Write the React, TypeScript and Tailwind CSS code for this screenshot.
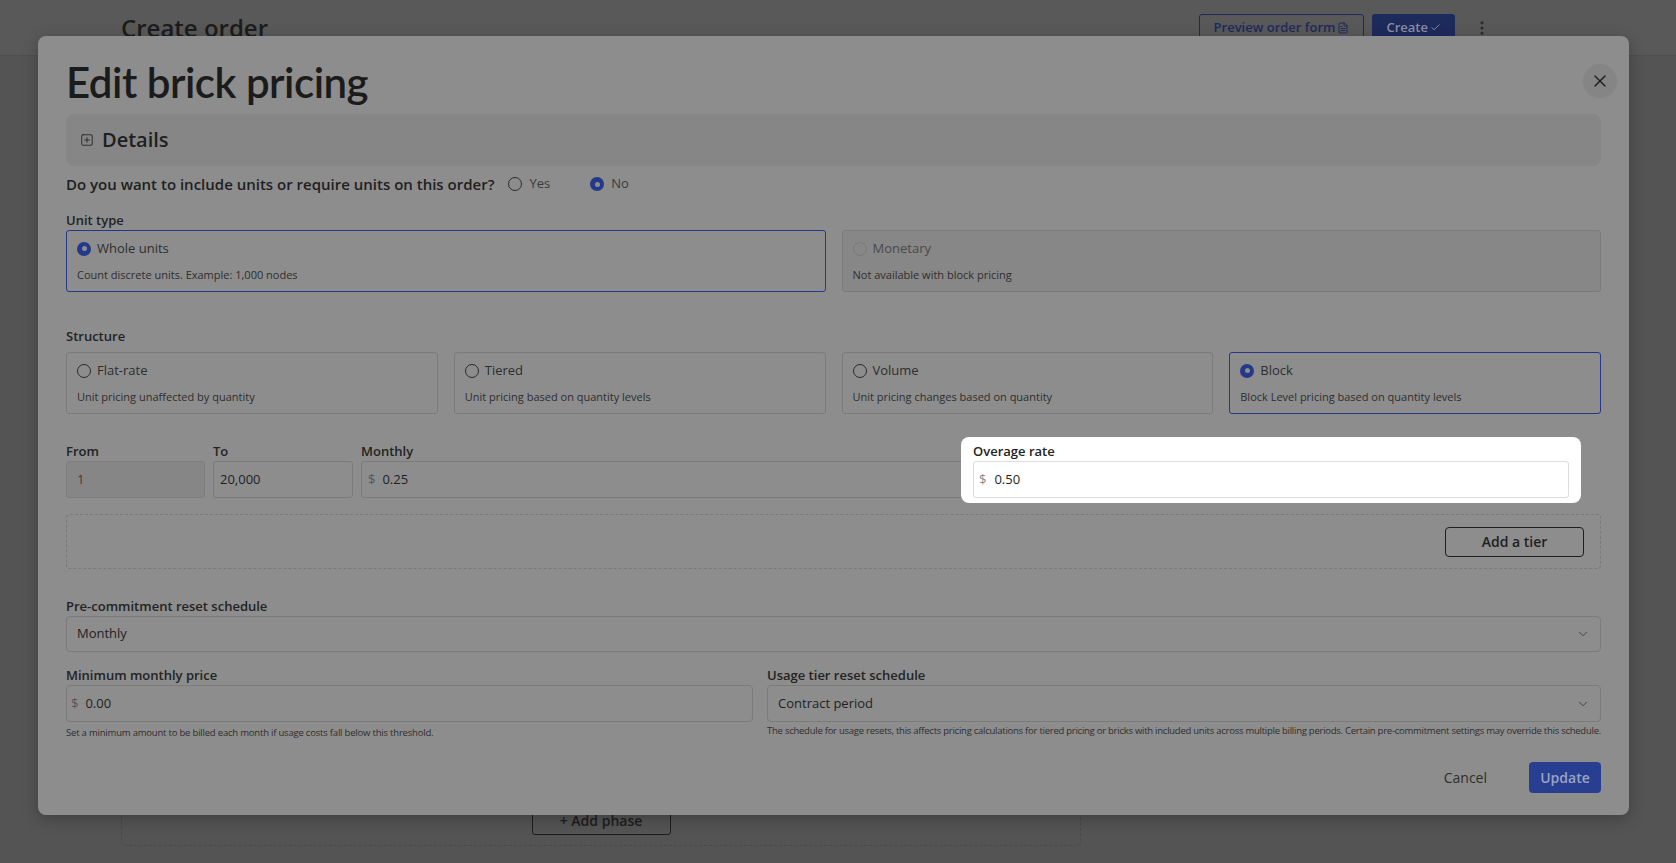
import { X, ChevronDown, SquarePlus, Check, FileText, EllipsisVertical } from "lucide-react"

function Radio({ on, disabled }: { on?: boolean; disabled?: boolean }) {
  if (on)
    return (
      <span className="flex h-[14px] w-[14px] items-center justify-center rounded-full bg-[#24398a]">
        <span className="h-[5px] w-[5px] rounded-full bg-[#8d8d8d]" />
      </span>
    )
  return <span className={`h-[14px] w-[14px] rounded-full border ${disabled ? "border-[#7a7a7a]" : "border-[#2b2b2b]"}`} />
}

function OptionCard({ title, desc, on, disabled }: { title: string; desc: string; on?: boolean; disabled?: boolean }) {
  return (
    <div className={`flex h-[62px] flex-1 flex-col justify-center gap-[8px] rounded-[3px] border px-[10px] ${on ? "border-[#24398a]" : "border-[#7b7b7b]"} ${disabled ? "bg-[#878787]" : ""}`}>
      <div className={`flex items-center gap-[6px] text-[13px] ${disabled ? "text-[#4a4a4a]" : "text-[#2e2e2e]"}`}>
        <Radio on={on} disabled={disabled} />
        {title}
      </div>
      <div className="text-[11px] text-[#2e2e2e]">{desc}</div>
    </div>
  )
}

function Label({ children, className = "" }: { children: React.ReactNode; className?: string }) {
  return <div className={`text-[13px] font-semibold text-[#232323] ${className}`}>{children}</div>
}

export default function App() {
  return (
    <div className="relative h-[863px] w-[1676px] overflow-hidden bg-[#545454]" style={{ fontFamily: '"Open Sans", sans-serif' }}>
      {/* page behind */}
      <div className="flex h-[56px] items-center justify-between border-b border-[#4f4f4f] bg-[#595959] pl-[121px] pr-[185px]">
        <div className="text-[24px] font-semibold text-[#1c1c1c]">Create order</div>
        <div className="flex items-center gap-[8px]">
          <div className="flex h-[27px] items-center gap-[2px] rounded-[3px] border border-[#1d2a5c] px-[14px] text-[13px] font-semibold text-[#1d2a5c]">
            Preview order form <FileText className="h-[12px] w-[12px]" />
          </div>
          <div className="flex h-[27px] items-center gap-[2px] rounded-[3px] bg-[#1d2a5c] px-[14px] text-[13px] font-semibold text-[#8a8fa6]">
            Create <Check className="h-[11px] w-[11px]" />
          </div>
          <EllipsisVertical className="ml-[10px] h-[18px] w-[18px] text-[#2a2a2a]" />
        </div>
      </div>
      <div className="ml-[121px] mt-[10px] flex h-[780px] w-[960px] items-end justify-center rounded-[4px] border border-dashed border-[#4a4a4a] pb-[10px]">
        <div className="flex h-[30px] w-[139px] items-center justify-center rounded-[3px] border border-[#1e1e1e] text-[14px] font-semibold text-[#1e1e1e]">+ Add phase</div>
      </div>

      {/* modal */}
      <div className="absolute left-[38px] top-[36px] flex h-[779px] w-[1591px] flex-col rounded-[8px] bg-[#8d8d8d] px-[28px] shadow-[0_4px_16px_rgba(0,0,0,0.25)]">
        <div className="flex items-start justify-between pt-[20px]">
          <div className="text-[42px] font-semibold leading-[52px] tracking-[-0.5px] text-[#1b1b1b]" style={{ fontFamily: "Lato, sans-serif" }}>Edit brick pricing</div>
          <div className="mr-[-16px] mt-[8px] flex h-[34px] w-[34px] items-center justify-center rounded-full bg-[#858585]">
            <X className="h-[20px] w-[20px] text-[#1b1b1b]" strokeWidth={1.6} />
          </div>
        </div>
        <div className="mt-[6px] flex h-[52px] items-center gap-[8px] rounded-[8px] bg-[#868686] px-[14px]">
          <SquarePlus className="h-[14px] w-[14px] text-[#2a2a2a]" strokeWidth={1.6} />
          <span className="text-[20px] font-semibold text-[#1f1f1f]">Details</span>
        </div>
        <div className="mt-[8px] flex h-[20px] items-center text-[15px] font-semibold text-[#1f1f1f]">
          Do you want to include units or require units on this order?
          <span className="ml-[14px] flex items-center gap-[7px] text-[13px] font-normal text-[#3a3a3a]"><Radio /> Yes</span>
          <span className="ml-[40px] flex items-center gap-[7px] text-[13px] font-normal text-[#3a3a3a]"><Radio on /> No</span>
        </div>
        <Label className="mt-[16px] leading-[20px]">Unit type</Label>
        <div className="flex gap-[16px]">
          <OptionCard on title="Whole units" desc="Count discrete units. Example: 1,000 nodes" />
          <OptionCard disabled title="Monetary" desc="Not available with block pricing" />
        </div>
        <Label className="mt-[34px] leading-[20px]">Structure</Label>
        <div className="mt-[6px] flex gap-[16px]">
          <OptionCard title="Flat-rate" desc="Unit pricing unaffected by quantity" />
          <OptionCard title="Tiered" desc="Unit pricing based on quantity levels" />
          <OptionCard title="Volume" desc="Unit pricing changes based on quantity" />
          <OptionCard on title="Block" desc="Block Level pricing based on quantity levels" />
        </div>

        <div className="mt-[23px] flex items-end gap-[8px]">
          <div className="w-[139px]">
            <Label className="leading-[20px]">From</Label>
            <div className="flex h-[37px] items-center rounded-[3px] border border-[#7e7e7e] bg-[#868686] px-[10px] text-[13px] text-[#3a3a3a]">1</div>
          </div>
          <div className="w-[140px]">
            <Label className="leading-[20px]">To</Label>
            <div className="flex h-[37px] items-center rounded-[3px] border border-[#7b7b7b] px-[6px] text-[13px] text-[#1f1f1f]">20,000</div>
          </div>
          <div className="w-[620px]">
            <Label className="leading-[20px]">Monthly</Label>
            <div className="flex h-[37px] items-center rounded-l-[3px] border border-[#7b7b7b] px-[6px] text-[13px] text-[#1f1f1f]">
              <span className="mr-[7px] text-[#555]">$</span>0.25
            </div>
          </div>
          <div className="relative z-10 -mb-[5px] ml-[-28px] w-[620px] rounded-[8px] bg-white px-[12px] pb-[5px] pt-[4px]">
            <div className="text-[13px] font-semibold leading-[20px] text-[#232323]">Overage rate</div>
            <div className="flex h-[37px] items-center rounded-[3px] border border-[#dcdcdc] px-[5px] text-[13px] text-[#1f1f1f]">
              <span className="mr-[8px] text-[#888]">$</span>0.50
            </div>
          </div>
        </div>

        <div className="mt-[16px] flex h-[55px] items-center justify-end rounded-[4px] border border-dashed border-[#7a7a7a] px-[16px]">
          <div className="flex h-[30px] w-[139px] items-center justify-center rounded-[4px] border border-[#1f1f1f] text-[14px] font-semibold text-[#1f1f1f]">Add a tier</div>
        </div>

        <Label className="mt-[27px] leading-[20px]">Pre-commitment reset schedule</Label>
        <div className="flex h-[36px] items-center justify-between rounded-[4px] border border-[#7b7b7b] px-[10px] text-[13px] text-[#1f1f1f]">
          Monthly <ChevronDown className="h-[14px] w-[14px] text-[#3a3a3a]" strokeWidth={1.5} />
        </div>

        <div className="mt-[13px] flex gap-[14px]">
          <div className="w-[706px]">
            <Label className="leading-[20px]">Minimum monthly price</Label>
            <div className="flex h-[37px] items-center rounded-[4px] border border-[#7b7b7b] px-[4px] text-[13px] text-[#1f1f1f]">
              <span className="mr-[7px] text-[#555]">$</span>0.00
            </div>
            <div className="mt-[4px] text-[9.5px] tracking-[-0.2px] text-[#2e2e2e]">Set a minimum amount to be billed each month if usage costs fall below this threshold.</div>
          </div>
          <div className="flex-1">
            <Label className="leading-[20px]">Usage tier reset schedule</Label>
            <div className="flex h-[37px] items-center justify-between rounded-[4px] border border-[#7b7b7b] px-[10px] text-[13px] text-[#1f1f1f]">
              Contract period <ChevronDown className="h-[14px] w-[14px] text-[#3a3a3a]" strokeWidth={1.5} />
            </div>
            <div className="mt-[2px] whitespace-nowrap text-[9.5px] tracking-[-0.25px] text-[#2e2e2e]">The schedule for usage resets, this affects pricing calculations for tiered pricing or bricks with included units across multiple billing periods. Certain pre-commitment settings may override this schedule.</div>
          </div>
        </div>

        <div className="mt-[22px] flex items-center justify-end gap-[42px]">
          <span className="text-[14px] text-[#2e2e2e]">Cancel</span>
          <div className="flex h-[31px] w-[72px] items-center justify-center rounded-[4px] bg-[#283f91] text-[14px] font-semibold text-[#9aa3c4]">Update</div>
        </div>
      </div>
    </div>
  )
}
